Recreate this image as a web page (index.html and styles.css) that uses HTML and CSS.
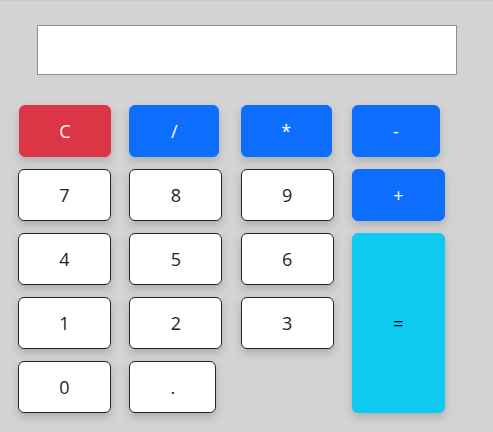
FILE: index.html
```html
<!DOCTYPE html>
<html>
<head>
<meta charset="utf-8">
<link rel="stylesheet" href="styles.css">
</head>
<body>
<div class="calc">
  <input class="display" type="text">
  <div class="keys">
    <button class="key danger w-c">C</button>
    <button class="key primary w90">/</button>
    <button class="key primary w91">*</button>
    <button class="key primary w88">-</button>
    <button class="key">7</button>
    <button class="key">8</button>
    <button class="key">9</button>
    <button class="key primary">+</button>
    <button class="key">4</button>
    <button class="key">5</button>
    <button class="key">6</button>
    <button class="key info equals">=</button>
    <button class="key">1</button>
    <button class="key">2</button>
    <button class="key">3</button>
    <button class="key">0</button>
    <button class="key w87">.</button>
  </div>
</div>
</body>
</html>
```

FILE: styles.css
```css
html, body {
  margin: 0;
  padding: 0;
}
body {
  background: #d3d3d3;
  border-top: 1px solid #c6c9cd;
  height: 431px;
  font-family: "Open Sans", "Noto Sans", sans-serif;
}
.calc {
  padding-top: 24px;
}
.display {
  display: block;
  box-sizing: border-box;
  margin: 0 0 0 37px;
  width: 420px;
  height: 50px;
  border: 1px solid #8f8f9d;
  background: #fff;
  padding: 0 6px;
  font-size: 16px;
}
.keys {
  margin-top: 30px;
  padding-left: 18px;
  display: grid;
  grid-template-columns: repeat(4, 93px);
  grid-auto-rows: 52px;
  column-gap: 18.33px;
  row-gap: 12px;
}
.key {
  box-sizing: border-box;
  width: 93px;
  height: 52px;
  margin: 0;
  padding: 0;
  border: 1px solid #212529;
  border-radius: 6px;
  background: #fff;
  color: #212529;
  font-family: "Open Sans", "Noto Sans", sans-serif;
  font-size: 18px;
  box-shadow: 0 4px 8px rgba(0, 0, 0, 0.18);
  justify-self: start;
}
.primary {
  background: #0d6efd;
  border-color: #0d6efd;
  color: #fff;
}
.danger {
  background: #dc3545;
  border-color: #dc3545;
  color: #fff;
}
.info {
  background: #0dcaf0;
  border-color: #0dcaf0;
  color: #000;
}
.equals {
  grid-column: 4;
  grid-row: 3 / span 3;
  height: 180px;
}
.w-c { width: 92px; justify-self: end; }
.w90 { width: 90px; }
.w91 { width: 91px; }
.w88 { width: 88px; }
.w87 { width: 87px; }
```
